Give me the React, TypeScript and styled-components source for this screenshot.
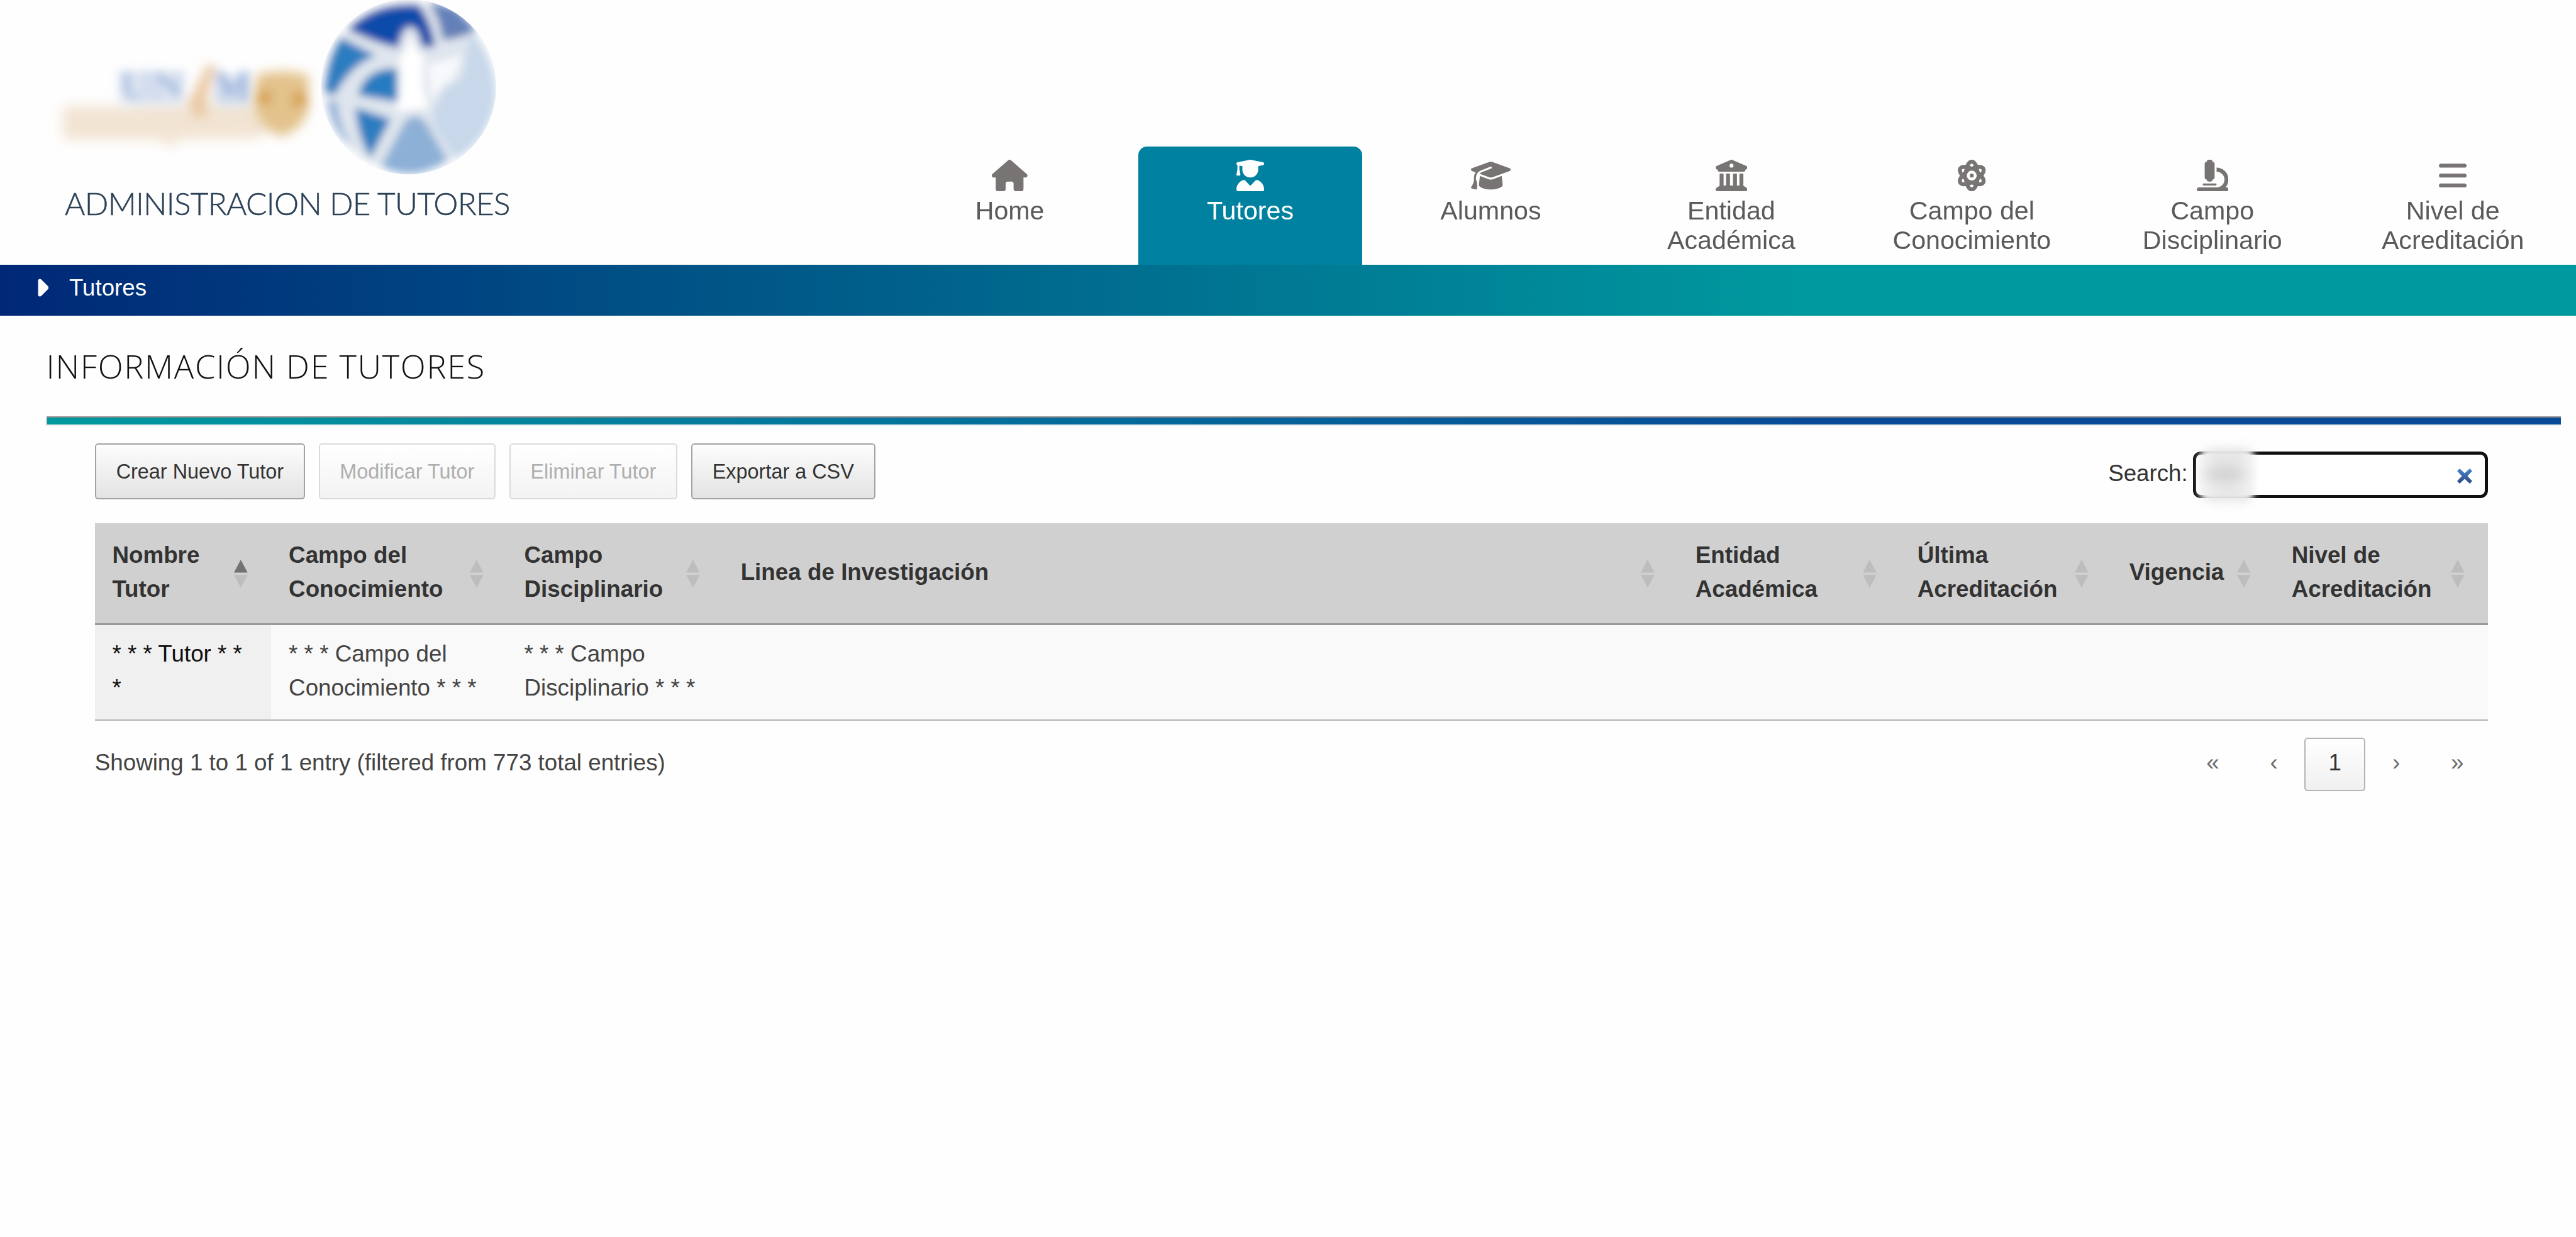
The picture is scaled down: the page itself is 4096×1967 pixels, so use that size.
import React from "react";
import styled, { createGlobalStyle } from "styled-components";
import {
  FaHouse,
  FaUserGraduate,
  FaGraduationCap,
  FaBuildingColumns,
  FaAtom,
  FaMicroscope,
  FaBars,
  FaCaretRight,
} from "react-icons/fa6";

const GlobalStyle = createGlobalStyle`
  *, *::before, *::after { box-sizing: border-box; }
  html, body { margin: 0; padding: 0; background: #fefefe; }
  body {
    font-family: "Liberation Sans", Arial, sans-serif;
    font-size: 36.8px;
    color: #333;
  }
`;

const Page = styled.div`
  width: 4096px;
  height: 1967px;
  overflow: hidden;
  background: #fefefe;
`;

const Header = styled.header`
  height: 421px;
  display: flex;
  justify-content: space-between;
  padding-right: 18px;
`;

const Brand = styled.div`
  display: flex;
  flex-direction: column;
`;

const BrandLogo = styled.svg`
  display: block;
  width: 820px;
  height: 290px;
`;

const BrandName = styled.div`
  margin: 3px 0 0 103px;
  font: 300 49.5px/60px Lato, "Open Sans", sans-serif;
  letter-spacing: -0.7px;
  color: #2b4156;
  -webkit-text-stroke: 0.5px #2b4156;
  white-space: nowrap;
`;

const Nav = styled.nav`
  display: flex;
  align-items: flex-end;
  gap: 26.85px;
`;

const NavTab = styled.a<{ $active?: boolean; $iconWidth: number }>`
  width: 355.6px;
  height: 188.4px;
  padding-top: 21.4px;
  display: flex;
  flex-direction: column;
  align-items: center;
  gap: 7.4px;
  border-radius: 14px 14px 0 0;
  background: ${(p) => (p.$active ? "#00819f" : "transparent")};
  color: ${(p) => (p.$active ? "#fff" : "#787473")};

  svg {
    display: block;
    flex: none;
    height: 50.4px;
    width: ${(p) => p.$iconWidth}px;
  }
`;

const NavLabel = styled.span<{ $active?: boolean }>`
  font-size: 41.2px;
  line-height: 47.3px;
  text-align: center;
  white-space: pre;
  color: ${(p) => (p.$active ? "#fff" : "#5a5a5a")};
`;

const Breadcrumb = styled.div`
  height: 81px;
  padding: 0 0 8px 54.5px;
  display: flex;
  align-items: center;
  gap: 33px;
  background: linear-gradient(to right, #002877 0%, #00999f 70%);
  color: #fff;
  font-size: 36.7px;

  svg {
    display: block;
    width: 22.5px;
    height: 45px;
  }
`;

const Section = styled.main`
  padding: 43.7px 23.7px 0 74.2px;
`;

const SectionTitle = styled.h1`
  margin: 0 0 0 -0.6px;
  font: 300 52.3px/72px "Open Sans", "Noto Sans", sans-serif;
  letter-spacing: 1.65px;
  color: #111;
`;

const Divider = styled.hr`
  height: 15.4px;
  margin: 44.3px 0 0;
  border: 2.6px solid;
  border-color: #918d8d #f0f0f0 #f0f0f0 #918d8d;
  border-right-width: 0;
  border-left-width: 1px;
  background: linear-gradient(to right, #00999f 0%, #074b98 70%) padding-box;
`;

const Panel = styled.div`
  padding: 28px 116.5px 0 76.6px;
`;

const Toolbar = styled.div`
  display: flex;
  justify-content: space-between;
  height: 127px;
`;

const ButtonGroup = styled.div`
  display: flex;
  gap: 21.6px;
  align-items: flex-start;
`;

const Button = styled.button<{ $w: number }>`
  width: ${(p) => p.$w}px;
  height: 88.6px;
  padding: 0;
  border: 2.6px solid #a3a3a3;
  border-radius: 5.2px;
  background: linear-gradient(to bottom, #fdfdfd, #e3e3e3);
  font: 32.4px/40px "Liberation Sans", Arial, sans-serif;
  color: #333;
  white-space: nowrap;

  &:disabled {
    border-color: #dadada;
    background: linear-gradient(to bottom, #ffffff, #f3f3f3);
    color: #aeaeae;
  }
`;

const Search = styled.label`
  display: flex;
  align-items: center;
  height: 73.6px;
  margin-top: 12.7px;
  font-size: 36.7px;
  color: #333;
`;

const SearchText = styled.span`
  padding-bottom: 3px;
`;

const SearchBox = styled.span`
  position: relative;
  display: flex;
  align-items: center;
  justify-content: flex-end;
  width: 468.8px;
  height: 73.6px;
  margin-left: 8.4px;
  padding: 4px 18.5px 0 0;
  border: 5.2px solid #101010;
  border-radius: 12px;
  background: #fff;
`;

const ClearIcon = styled.svg`
  display: block;
  width: 26px;
  height: 26px;
`;

const Redaction = styled.svg`
  position: absolute;
  left: -25px;
  top: -35px;
  width: 170px;
  height: 134px;
`;

const Grid = styled.div`
  display: flex;
  flex-direction: column;
`;

const columns = "280.7px 374.4px 344.2px 1518px 353px 337px 258px 339.7px";

const HeadRow = styled.div`
  display: grid;
  grid-template-columns: ${columns};
  height: 162px;
  background: #d0d0d0;
  border-bottom: 3px solid #999;
`;

const HeadCell = styled.div`
  display: flex;
  align-items: center;
  justify-content: space-between;
  padding: 0 37.5px 0 27.6px;
`;

const HeadLabel = styled.span`
  padding-bottom: 3px;
  font-weight: 700;
  font-size: 36.8px;
  line-height: 54px;
  white-space: pre;
  color: #333;
`;

const SortIcon = styled.svg<{ $active?: boolean }>`
  display: block;
  flex: none;
  width: 21.7px;
  height: 44.6px;
  fill: #bdbdbd;

  path:first-child {
    fill: ${(p) => (p.$active ? "#727272" : "#bdbdbd")};
  }
`;

const BodyRow = styled.div`
  display: grid;
  grid-template-columns: ${columns};
  height: 151.6px;
  background: #f9f9f9;
  border-bottom: 2.8px solid #b4b4b4;
`;

const BodyCell = styled.div<{ $sorted?: boolean }>`
  padding: 19px 0 0 27.6px;
  line-height: 54px;
  white-space: pre;
  background: ${(p) => (p.$sorted ? "#f0f0f0" : "transparent")};
  color: ${(p) => (p.$sorted ? "#111" : "#444")};
`;

const Footer = styled.div`
  display: flex;
  justify-content: space-between;
  align-items: center;
  height: 84.8px;
  margin-top: 27px;
`;

const Info = styled.div`
  padding-bottom: 5px;
  font-size: 36.75px;
  color: #444;
`;

const Pager = styled.div`
  display: flex;
`;

const PageLink = styled.a<{ $current?: boolean }>`
  width: 97.2px;
  height: 84.8px;
  padding-bottom: 4.6px;
  display: flex;
  align-items: center;
  justify-content: center;
  border: 2.6px solid ${(p) => (p.$current ? "#b4b4b4" : "transparent")};
  border-radius: 5.2px;
  background: ${(p) =>
    p.$current ? "linear-gradient(to bottom, #ffffff, #f0f0f0)" : "none"};
  color: ${(p) => (p.$current ? "#333" : "#6c6c6c")};
`;

const Logo = () => (
  <BrandLogo viewBox="0 0 820 290">
    <defs>
      <filter id="soft" x="-20%" y="-20%" width="140%" height="140%">
        <feGaussianBlur stdDeviation="27" />
      </filter>
      <filter id="softer" x="-20%" y="-50%" width="140%" height="200%">
        <feGaussianBlur stdDeviation="34 42" />
      </filter>
      <filter id="letters" x="-20%" y="-40%" width="140%" height="180%">
        <feGaussianBlur stdDeviation="30 34" />
      </filter>
      <filter id="shield" x="-40%" y="-30%" width="180%" height="160%">
        <feGaussianBlur stdDeviation="30 40" />
      </filter>
      <clipPath id="disc">
        <circle cx="730" cy="601" r="606" />
      </clipPath>
    </defs>

    <g transform="translate(68.9 82.65) scale(0.2811 0.2296)">
      <path
        filter="url(#softer)"
        fill="#f2e4d3"
        d="M110 375L440 375L800 355L1200 360L1300 500L1220 600L780 605L720 660L660 610L110 605Z"
      />
      <g filter="url(#letters)">
        <rect x="440" y="140" width="350" height="230" fill="#d6e0ef" opacity="0.7" />
        <rect x="985" y="190" width="185" height="190" fill="#ccd8ea" opacity="0.7" />
        <text
          x="425"
          y="325"
          fontFamily="'Liberation Serif', 'Times New Roman', serif"
          fontWeight="700"
          fontSize="280"
          textLength="375"
          lengthAdjust="spacingAndGlyphs"
          fill="#9ab2da"
        >
          UN
        </text>
        <text
          x="962"
          y="325"
          fontFamily="'Liberation Serif', 'Times New Roman', serif"
          fontWeight="700"
          fontSize="280"
          textLength="215"
          lengthAdjust="spacingAndGlyphs"
          fill="#86a4d6"
        >
          M
        </text>
        <path fill="#e9c9a5" d="M925 90L975 90L925 330L930 400L900 470L850 440L820 350Z" />
      </g>
      <g filter="url(#shield)">
        <path
          fill="#e3c28c"
          d="M1205 160Q1340 110 1500 160L1500 390Q1480 530 1345 585Q1220 530 1195 390Z"
        />
        <circle cx="1245" cy="315" r="46" fill="#d39a3c" />
        <circle cx="1450" cy="330" r="46" fill="#d39a3c" />
      </g>
    </g>

    <g transform="translate(482.1 0) scale(0.2296)">
      <g clipPath="url(#disc)">
        <g filter="url(#soft)">
          <circle cx="732" cy="600" r="588" fill="#dfe5ed" />
          <path
            fill="#c8d8ea"
            d="M1140 300L1180 230Q1420 560 1290 840Q1220 1010 1060 1100L900 870L905 760L985 610L1100 550Z"
          />
          <path
            fill="#8db0d7"
            d="M700 850Q770 760 850 850L1000 1110Q760 1270 540 1150Z"
          />
          <path
            fill="#0a4caa"
            d="M310 205Q500 10 800 35Q890 150 915 325L820 325Q800 190 742 185Q680 190 660 330Q530 310 310 205Z"
          />
          <path
            fill="#6480b8"
            d="M870 10L1060 60L1200 210Q1070 275 965 275Q945 130 870 10Z"
          />
          <path
            fill="#2a7dc0"
            d="M260 260L505 385Q335 440 220 655L150 645Q155 430 260 260Z"
          />
          <path fill="#94b3da" d="M165 700L235 700Q250 880 340 1010Q200 930 165 700Z" />
          <path
            fill="#287bc0"
            d="M650 475L655 705L380 660Q415 510 560 480Z"
          />
          <path fill="#2a7dc0" d="M362 745L605 825L465 1095Q372 930 362 745Z" />
          <path
            fill="#ffffff"
            d="M742 220Q770 350 840 400Q800 560 870 750L640 770Q690 560 660 420Q720 350 742 220Z"
          />
          <path fill="#f7f9fc" d="M860 450L1095 380Q1080 540 970 590L890 700Z" />
        </g>
      </g>
    </g>
  </BrandLogo>
);

const navItems = [
  { label: "Home", Icon: FaHouse, width: 56.7 },
  { label: "Tutores", Icon: FaUserGraduate, width: 44.1, active: true },
  { label: "Alumnos", Icon: FaGraduationCap, width: 63 },
  { label: "Entidad\nAcadémica", Icon: FaBuildingColumns, width: 50.4 },
  { label: "Campo del\nConocimiento", Icon: FaAtom, width: 50.4 },
  { label: "Campo\nDisciplinario", Icon: FaMicroscope, width: 50.4 },
  { label: "Nivel de\nAcreditación", Icon: FaBars, width: 44.1 },
];

const headers = [
  "Nombre\nTutor",
  "Campo del\nConocimiento",
  "Campo\nDisciplinario",
  "Linea de Investigación",
  "Entidad\nAcadémica",
  "Última\nAcreditación",
  "Vigencia",
  "Nivel de\nAcreditación",
];

const row = [
  "* * * Tutor * *\n*",
  "* * * Campo del\nConocimiento * * *",
  "* * * Campo\nDisciplinario * * *",
  "",
  "",
  "",
  "",
  "",
];

const actions = [
  { label: "Crear Nuevo Tutor", width: 334.2 },
  { label: "Modificar Tutor", width: 281.5, disabled: true },
  { label: "Eliminar Tutor", width: 267.4, disabled: true },
  { label: "Exportar a CSV", width: 293.3 },
];

const pages = ["«", "‹", "1", "›", "»"];

export default function App() {
  return (
    <Page>
      <GlobalStyle />
      <Header>
        <Brand>
          <Logo />
          <BrandName>ADMINISTRACION DE TUTORES</BrandName>
        </Brand>
        <Nav>
          {navItems.map(({ label, Icon, active, width }) => (
            <NavTab key={label} $active={active} $iconWidth={width}>
              <Icon />
              <NavLabel $active={active}>{label}</NavLabel>
            </NavTab>
          ))}
        </Nav>
      </Header>

      <Breadcrumb>
        <FaCaretRight />
        <span>Tutores</span>
      </Breadcrumb>

      <Section>
        <SectionTitle>INFORMACIÓN DE TUTORES</SectionTitle>
        <Divider />
        <Panel>
          <Toolbar>
            <ButtonGroup>
              {actions.map((a) => (
                <Button key={a.label} $w={a.width} disabled={a.disabled}>
                  {a.label}
                </Button>
              ))}
            </ButtonGroup>
            <Search>
              <SearchText>Search:</SearchText>
              <SearchBox>
                <Redaction viewBox="0 0 170 134">
                  <defs>
                    <filter id="smudge" x="-30%" y="-30%" width="160%" height="160%">
                      <feGaussianBlur stdDeviation="5" />
                    </filter>
                    <filter id="smudgeInk" x="-50%" y="-80%" width="200%" height="260%">
                      <feGaussianBlur stdDeviation="11" />
                    </filter>
                  </defs>
                  <rect x="30" y="25" width="88" height="84" rx="16" fill="#f6f6f6" filter="url(#smudge)" />
                  <g filter="url(#smudgeInk)">
                    <rect x="42" y="30" width="68" height="9" fill="#cfcfcf" />
                    <rect x="42" y="95" width="68" height="9" fill="#cfcfcf" />
                    <ellipse cx="72" cy="66" rx="36" ry="15" fill="#cfcfcf" />
                  </g>
                </Redaction>
                <ClearIcon viewBox="0 0 26 26">
                  <defs>
                    <linearGradient id="cross" x1="0" y1="0" x2="0" y2="1">
                      <stop offset="0" stopColor="#4a86d0" />
                      <stop offset="1" stopColor="#2a4680" />
                    </linearGradient>
                  </defs>
                  <path
                    fill="url(#cross)"
                    d="M5 1L13 8.6L21 1L25 5L17.4 13L25 21L21 25L13 17.4L5 25L1 21L8.6 13L1 5Z"
                  />
                </ClearIcon>
              </SearchBox>
            </Search>
          </Toolbar>

          <Grid>
            <HeadRow>
              {headers.map((h, i) => (
                <HeadCell key={h}>
                  <HeadLabel>{h}</HeadLabel>
                  <SortIcon $active={i === 0} viewBox="0 0 21.7 44.6">
                    <path d="M10.85 0L21.7 20.4H0Z" />
                    <path d="M0 24.2H21.7L10.85 44.6Z" />
                  </SortIcon>
                </HeadCell>
              ))}
            </HeadRow>
            <BodyRow>
              {row.map((c, i) => (
                <BodyCell key={i} $sorted={i === 0}>
                  {c}
                </BodyCell>
              ))}
            </BodyRow>
          </Grid>

          <Footer>
            <Info>Showing 1 to 1 of 1 entry (filtered from 773 total entries)</Info>
            <Pager>
              {pages.map((p) => (
                <PageLink key={p} $current={p === "1"}>
                  {p}
                </PageLink>
              ))}
            </Pager>
          </Footer>
        </Panel>
      </Section>
    </Page>
  );
}
